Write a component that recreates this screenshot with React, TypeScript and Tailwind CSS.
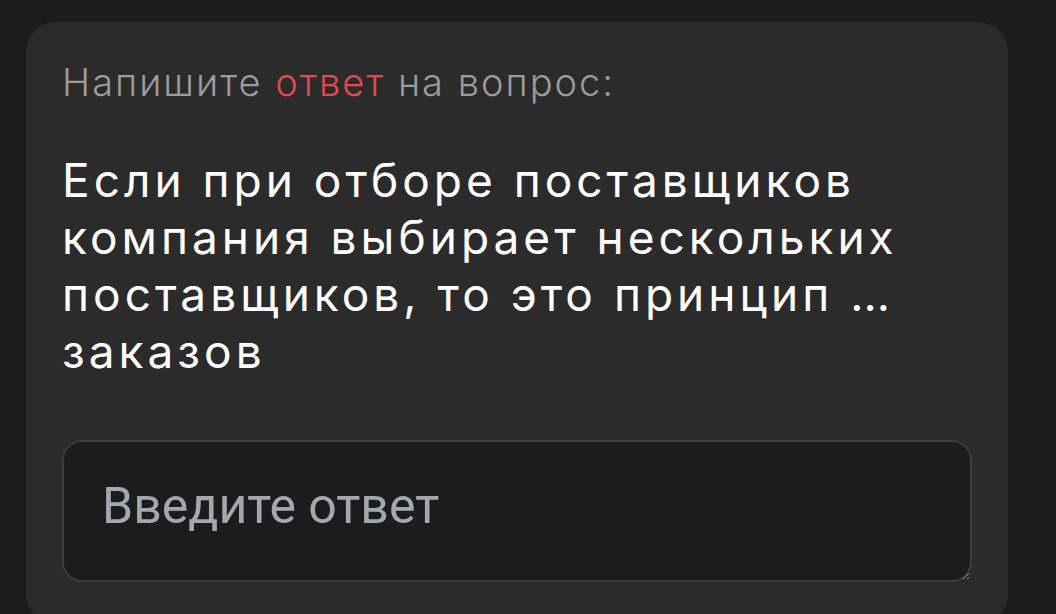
import * as React from "react";

const question =
  "Если при отборе поставщиков компания выбирает нескольких поставщиков, то это принцип … заказов";

export default function App() {
  const [answer, setAnswer] = React.useState("");

  return (
    <div className="min-h-screen bg-[#1c1c1c] px-[26px] pt-[22px] [font-family:Inter,'Noto_Sans',sans-serif]">
      <div className="h-[602px] w-[982px] rounded-[30px] bg-[#2b2b2b] px-9 pt-[40px]">
        <p className="text-[38px] font-light leading-[40px] tracking-[2px] text-[#9c9c9c]">
          Напишите <span className="text-[#e5484f]">ответ</span> на вопрос:
        </p>
        <h2 className="mt-[50px] text-[46px] font-normal leading-[57px] tracking-[4px] text-white">
          {question}
        </h2>
        <textarea
          value={answer}
          onChange={(e) => setAnswer(e.target.value)}
          placeholder="Введите ответ"
          className="mt-[60px] block h-[142px] w-[910px] rounded-[20px] border-2 border-[#3c3c3c] bg-[#1c1c1c] px-[38px] pt-[35px] text-[50px] leading-[58px] text-white outline-none placeholder:text-[#a3a8b0] [font-family:Roboto,sans-serif]"
        />
      </div>
    </div>
  );
}
